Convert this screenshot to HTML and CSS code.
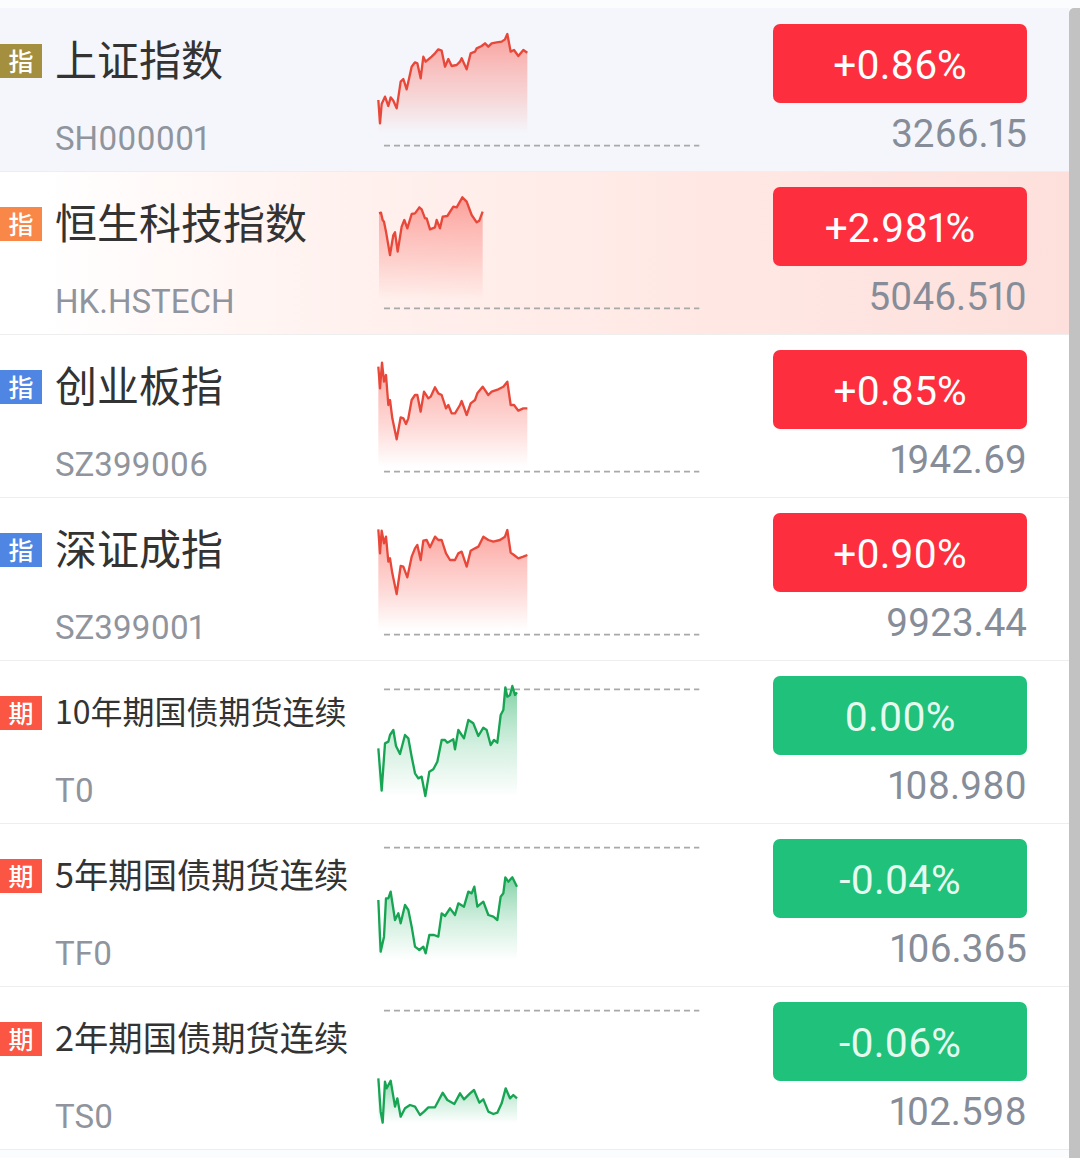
FILE: index.html
```html
<!DOCTYPE html>
<html lang="zh-CN">
<head>
    <meta charset="UTF-8">
    <meta name="viewport" content="width=device-width, initial-scale=1.0">
    <title>行情列表</title>
    <link rel="stylesheet" href="styles.css">
</head>
<body>
<svg class="chart-defs" aria-hidden="true">
    <defs>
        <linearGradient id="fadeRed" x1="0" y1="0" x2="0" y2="1">
            <stop offset="0" stop-color="#fb7f78" stop-opacity="0.72"/>
            <stop offset="0.6" stop-color="#fb9a94" stop-opacity="0.38"/>
            <stop offset="1" stop-color="#fb9a94" stop-opacity="0"/>
        </linearGradient>
        <linearGradient id="fadeGreen" x1="0" y1="0" x2="0" y2="1">
            <stop offset="0" stop-color="#35b56f" stop-opacity="0.62"/>
            <stop offset="0.55" stop-color="#5cc68c" stop-opacity="0.26"/>
            <stop offset="1" stop-color="#5cc68c" stop-opacity="0"/>
        </linearGradient>
    </defs>
</svg>

<div class="page">
    <main class="quote-list">

        <!-- 指数 -->
        <section class="quote-row row-selected">
            <div class="name-col">
                <div class="name-line">
                    <span class="tag tag-gold">指</span>
                    <span class="name">上证指数</span>
                </div>
                <div class="code">SH000001</div>
            </div>
            <svg class="chart" viewBox="0 24 1080 489">
                <line class="base" x1="72" y1="437" x2="1018" y2="437"/>
                <polygon class="area-up" points="55,300 60,370 65,312 75,290 85,318 92,292 100,302 110,325 122,245 130,237 140,268 155,200 165,187 172,190 182,235 190,170 197,185 215,170 225,160 235,148 245,152 255,200 265,177 275,198 290,195 300,185 305,175 320,208 332,160 345,155 350,145 365,138 375,130 385,140 395,130 410,127 425,125 435,118 442,102 452,155 462,150 475,168 490,150 502,158 502,400 55,400"/>
                <polyline class="line-up" points="55,300 60,370 65,312 75,290 85,318 92,292 100,302 110,325 122,245 130,237 140,268 155,200 165,187 172,190 182,235 190,170 197,185 215,170 225,160 235,148 245,152 255,200 265,177 275,198 290,195 300,185 305,175 320,208 332,160 345,155 350,145 365,138 375,130 385,140 395,130 410,127 425,125 435,118 442,102 452,155 462,150 475,168 490,150 502,158"/>
            </svg>
            <div class="price-col">
                <div class="change change-up">+0.86%</div>
                <div class="price">3266.15</div>
            </div>
        </section>

        <section class="quote-row row-hot">
            <div class="name-col">
                <div class="name-line">
                    <span class="tag tag-orange">指</span>
                    <span class="name">恒生科技指数</span>
                </div>
                <div class="code">HK.HSTECH</div>
            </div>
            <svg class="chart" viewBox="0 513 1080 489">
                <line class="base" x1="72" y1="925" x2="1018" y2="925"/>
                <polygon class="area-up" points="57,640 63,638 68,660 72,665 78,695 90,765 100,705 105,697 113,755 125,680 133,660 142,685 155,642 165,640 178,622 185,628 195,655 200,655 210,688 225,682 230,660 240,685 248,650 262,648 280,620 290,622 307,592 320,605 335,645 350,667 358,662 368,635 368,900 57,900"/>
                <polyline class="line-up" points="57,640 63,638 68,660 72,665 78,695 90,765 100,705 105,697 113,755 125,680 133,660 142,685 155,642 165,640 178,622 185,628 195,655 200,655 210,688 225,682 230,660 240,685 248,650 262,648 280,620 290,622 307,592 320,605 335,645 350,667 358,662 368,635"/>
            </svg>
            <div class="price-col">
                <div class="change change-up">+2.981%</div>
                <div class="price">5046.510</div>
            </div>
        </section>

        <section class="quote-row">
            <div class="name-col">
                <div class="name-line">
                    <span class="tag tag-blue">指</span>
                    <span class="name">创业板指</span>
                </div>
                <div class="code">SZ399006</div>
            </div>
            <svg class="chart" viewBox="0 -18 1080 489">
                <line class="base" x1="72" y1="395" x2="1018" y2="395"/>
                <polygon class="area-up" points="55,80 60,145 66,68 72,125 78,105 85,195 90,180 97,235 110,298 122,232 130,235 138,252 145,235 155,180 165,165 172,165 182,215 192,155 205,175 212,170 225,142 235,160 245,165 258,205 265,195 275,220 285,220 300,195 305,183 320,225 332,190 345,180 352,160 368,140 385,165 395,155 415,148 430,140 442,125 452,195 462,195 475,212 490,205 502,205 502,380 55,380"/>
                <polyline class="line-up" points="55,80 60,145 66,68 72,125 78,105 85,195 90,180 97,235 110,298 122,232 130,235 138,252 145,235 155,180 165,165 172,165 182,215 192,155 205,175 212,170 225,142 235,160 245,165 258,205 265,195 275,220 285,220 300,195 305,183 320,225 332,190 345,180 352,160 368,140 385,165 395,155 415,148 430,140 442,125 452,195 462,195 475,212 490,205 502,205"/>
            </svg>
            <div class="price-col">
                <div class="change change-up">+0.85%</div>
                <div class="price">1942.69</div>
            </div>
        </section>

        <section class="quote-row">
            <div class="name-col">
                <div class="name-line">
                    <span class="tag tag-blue">指</span>
                    <span class="name">深证成指</span>
                </div>
                <div class="code">SZ399001</div>
            </div>
            <svg class="chart" viewBox="0 471 1080 489">
                <line class="base" x1="72" y1="884" x2="1018" y2="884"/>
                <polygon class="area-up" points="55,568 60,640 65,572 72,610 78,590 85,665 90,655 97,700 110,762 122,678 130,680 142,712 155,650 165,625 172,615 182,660 190,602 200,600 210,622 225,590 235,600 245,600 258,640 270,660 285,660 295,640 305,635 320,680 332,632 345,625 355,620 370,590 385,600 400,605 420,600 435,590 442,570 452,638 462,645 475,655 490,650 502,645 502,870 55,870"/>
                <polyline class="line-up" points="55,568 60,640 65,572 72,610 78,590 85,665 90,655 97,700 110,762 122,678 130,680 142,712 155,650 165,625 172,615 182,660 190,602 200,600 210,622 225,590 235,600 245,600 258,640 270,660 285,660 295,640 305,635 320,680 332,632 345,625 355,620 370,590 385,600 400,605 420,600 435,590 442,570 452,638 462,645 475,655 490,650 502,645"/>
            </svg>
            <div class="price-col">
                <div class="change change-up">+0.90%</div>
                <div class="price">9923.44</div>
            </div>
        </section>

        <!-- 期货 -->
        <section class="quote-row">
            <div class="name-col">
                <div class="name-line">
                    <span class="tag tag-red">期</span>
                    <span class="name name-long name-tight">10年期国债期货连续</span>
                </div>
                <div class="code">T0</div>
            </div>
            <svg class="chart" viewBox="0 0 1080 489">
                <line class="base" x1="72" y1="88" x2="1018" y2="88"/>
                <polygon class="area-down" points="55,265 65,392 75,250 85,245 90,225 100,210 108,258 120,282 135,225 145,235 155,290 165,340 175,355 185,350 196,408 208,335 220,328 232,305 245,240 255,240 262,248 280,238 285,268 295,210 312,235 325,180 340,190 355,228 370,203 380,210 392,255 402,240 412,248 422,165 430,150 436,82 442,110 450,105 457,78 465,105 471,97 471,410 55,410"/>
                <polyline class="line-down" points="55,265 65,392 75,250 85,245 90,225 100,210 108,258 120,282 135,225 145,235 155,290 165,340 175,355 185,350 196,408 208,335 220,328 232,305 245,240 255,240 262,248 280,238 285,268 295,210 312,235 325,180 340,190 355,228 370,203 380,210 392,255 402,240 412,248 422,165 430,150 436,82 442,110 450,105 457,78 465,105 471,97"/>
            </svg>
            <div class="price-col">
                <div class="change change-down">0.00%</div>
                <div class="price">108.980</div>
            </div>
        </section>

        <section class="quote-row">
            <div class="name-col">
                <div class="name-line">
                    <span class="tag tag-red">期</span>
                    <span class="name name-long">5年期国债期货连续</span>
                </div>
                <div class="code">TF0</div>
            </div>
            <svg class="chart" viewBox="0 489 1080 489">
                <line class="base" x1="72" y1="563" x2="1018" y2="563"/>
                <polygon class="area-down" points="55,720 62,875 72,830 78,715 85,715 92,695 105,780 115,760 122,790 135,735 145,750 155,800 165,860 178,870 190,860 197,880 208,825 222,825 235,830 245,760 255,768 270,745 285,765 295,730 312,740 325,695 335,700 343,680 352,740 370,725 385,765 400,770 412,780 422,710 430,700 436,652 445,665 457,652 471,680 471,900 55,900"/>
                <polyline class="line-down" points="55,720 62,875 72,830 78,715 85,715 92,695 105,780 115,760 122,790 135,735 145,750 155,800 165,860 178,870 190,860 197,880 208,825 222,825 235,830 245,760 255,768 270,745 285,765 295,730 312,740 325,695 335,700 343,680 352,740 370,725 385,765 400,770 412,780 422,710 430,700 436,652 445,665 457,652 471,680"/>
            </svg>
            <div class="price-col">
                <div class="change change-down">-0.04%</div>
                <div class="price">106.365</div>
            </div>
        </section>

        <section class="quote-row">
            <div class="name-col">
                <div class="name-line">
                    <span class="tag tag-red">期</span>
                    <span class="name name-long">2年期国债期货连续</span>
                </div>
                <div class="code">TS0</div>
            </div>
            <svg class="chart" viewBox="0 978 1080 489">
                <line class="base" x1="72" y1="1052" x2="1018" y2="1052"/>
                <polygon class="area-down" points="55,1255 62,1355 68,1388 75,1265 80,1285 92,1262 105,1340 112,1315 122,1370 135,1345 150,1335 165,1340 180,1365 192,1355 205,1342 225,1342 248,1298 262,1320 283,1332 300,1300 312,1318 330,1300 342,1290 358,1328 370,1318 385,1355 400,1362 412,1358 425,1330 437,1285 450,1315 460,1305 471,1315 471,1390 55,1390"/>
                <polyline class="line-down" points="55,1255 62,1355 68,1388 75,1265 80,1285 92,1262 105,1340 112,1315 122,1370 135,1345 150,1335 165,1340 180,1365 192,1355 205,1342 225,1342 248,1298 262,1320 283,1332 300,1300 312,1318 330,1300 342,1290 358,1328 370,1318 385,1355 400,1362 412,1358 425,1330 437,1285 450,1315 460,1305 471,1315"/>
            </svg>
            <div class="price-col">
                <div class="change change-down">-0.06%</div>
                <div class="price">102.598</div>
            </div>
        </section>

    </main>
    <div class="scrollbar"></div>
</div>
</body>
</html>
```

FILE: styles.css
```css
html, body {
    margin: 0;
    padding: 0;
    height: 1158px;
    overflow: hidden;
}

body {
    font-family: Roboto, "Noto Sans CJK SC", sans-serif;
    font-variant-numeric: proportional-nums;
    background-color: #fff;
    color: #333;
}

/* only holds the gradients, takes no room */
.chart-defs {
    display: block;
    width: 0;
    height: 0;
}

.page {
    display: flex;
    height: 1150px;
    padding-top: 8px;
    background-color: #fbfcfd;
}

.quote-list {
    flex: 1;
    min-width: 0;
}

.scrollbar {
    width: 11px;
    background-color: #c2c2c2;
    border-top-left-radius: 5px;
}

/* divider is a shadow so it sits on the first pixel of the next row */
.quote-row {
    display: flex;
    height: 163px;
    background-color: #fff;
    box-shadow: inset 0 1px 0 #eeeeee;
}

.quote-row:last-child {
    box-shadow: inset 0 1px 0 #eeeeee, 0 1px 0 #eeeeee;
}

.row-selected {
    background-color: #f4f6fb;
    box-shadow: none;
}

.row-hot {
    background: linear-gradient(90deg, #ffffff 4%, #fff1ee 33%, #ffe8e4 66%, #fde0dc 100%);
}

/* left column */
.name-col {
    width: 360px;
    flex-shrink: 0;
    padding-top: 36px;
    box-sizing: border-box;
}

.name-line {
    display: flex;
    align-items: center;
    height: 34px;
}

.tag {
    width: 42px;
    height: 34px;
    flex-shrink: 0;
    margin-right: 13px;
    font-family: "Noto Sans CJK SC", sans-serif;
    font-size: 25px;
    font-weight: 500;
    line-height: 32px;
    text-align: center;
    color: #fff;
}

.tag-gold { background-color: #a38f3e; }
.tag-orange { background-color: #f98747; }
.tag-blue { background-color: #4f85e3; }
.tag-red { background-color: #fb5543; }

.name {
    padding-bottom: 7px;
    font-family: "Noto Sans CJK SC", sans-serif;
    font-size: 42px;
    line-height: 34px;
    white-space: nowrap;
    color: #333;
}

.name-long {
    font-size: 34.3px;
}

.name-tight {
    font-size: 32px;
}

.code {
    margin-top: 44px;
    padding-left: 55px;
    font-size: 33px;
    line-height: 34px;
    color: #8f949d;
}

/* middle column */
.chart {
    display: block;
    width: 360px;
    height: 163px;
    flex-shrink: 0;
}

.base {
    stroke: #a9a9a9;
    stroke-width: 5;
    stroke-dasharray: 18 12;
}

.area-up { fill: url(#fadeRed); }
.area-down { fill: url(#fadeGreen); }

.line-up,
.line-down {
    fill: none;
    stroke-width: 7;
    stroke-linejoin: round;
}

.line-up { stroke: #e8483a; }
.line-down { stroke: #17a553; }

/* right column */
.price-col {
    flex: 1;
    padding: 16px 42px 0 53px;
    min-width: 0;
}

.change {
    box-sizing: border-box;
    height: 79px;
    padding-top: 2px;
    border-radius: 7px;
    font-size: 40.5px;
    line-height: 78px;
    text-align: center;
    color: #fff;
}

.change-up { background-color: #fd2f3f; }

.change-down {
    background-color: #1fc17b;
    color: #e6fbf0;
}

.price {
    margin-top: 9px;
    font-size: 38.5px;
    line-height: 44px;
    text-align: right;
    color: #868d99;
}
```
